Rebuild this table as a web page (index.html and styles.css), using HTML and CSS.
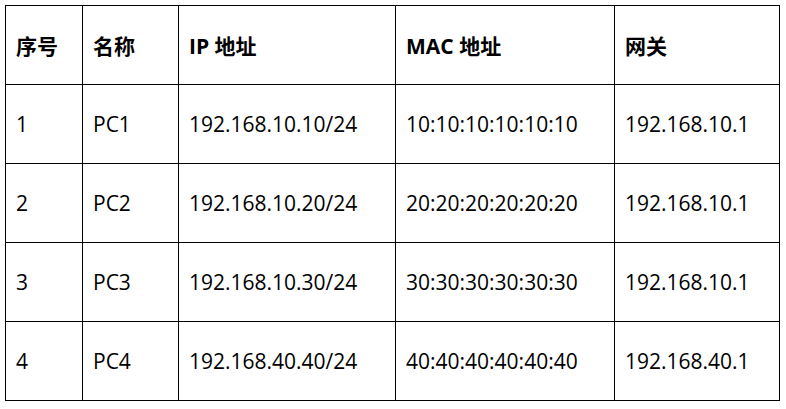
FILE: index.html
```html
<!DOCTYPE html>
<html lang="zh-CN">
<head>
<meta charset="utf-8">
<link rel="stylesheet" href="styles.css">
</head>
<body>
<table class="net">
  <colgroup>
    <col class="c1"><col class="c2"><col class="c3"><col class="c4"><col class="c5">
  </colgroup>
  <thead>
    <tr><th>序号</th><th>名称</th><th>IP 地址</th><th>MAC 地址</th><th>网关</th></tr>
  </thead>
  <tbody>
    <tr><td>1</td><td>PC1</td><td>192.168.10.10/24</td><td>10:10:10:10:10:10</td><td>192.168.10.1</td></tr>
    <tr><td>2</td><td>PC2</td><td>192.168.10.20/24</td><td>20:20:20:20:20:20</td><td>192.168.10.1</td></tr>
    <tr><td>3</td><td>PC3</td><td>192.168.10.30/24</td><td>30:30:30:30:30:30</td><td>192.168.10.1</td></tr>
    <tr><td>4</td><td>PC4</td><td>192.168.40.40/24</td><td>40:40:40:40:40:40</td><td>192.168.40.1</td></tr>
  </tbody>
</table>
</body>
</html>
```
FILE: styles.css
```css
html, body {
  margin: 0;
  padding: 0;
  background: #ffffff;
}
body {
  padding: 5px 0 0 5px;
  font-family: "Open Sans", "Noto Sans CJK SC", sans-serif;
  color: #000000;
}
.net {
  border-collapse: collapse;
  table-layout: fixed;
  width: 774px;
}
.c1 { width: 77px; }
.c2 { width: 96px; }
.c3 { width: 217px; }
.c4 { width: 219px; }
.c5 { width: 165px; }
.net th, .net td {
  border: 1px solid #000000;
  height: 79px;
  padding: 0 0 0 10px;
  text-align: left;
  vertical-align: middle;
  font-size: 21px;
  box-sizing: border-box;
}
.net th {
  font-weight: 700;
  font-family: "Open Sans", "Noto Sans CJK SC", sans-serif;
}
.net td {
  font-weight: 400;
  color: #000000;
}
```
